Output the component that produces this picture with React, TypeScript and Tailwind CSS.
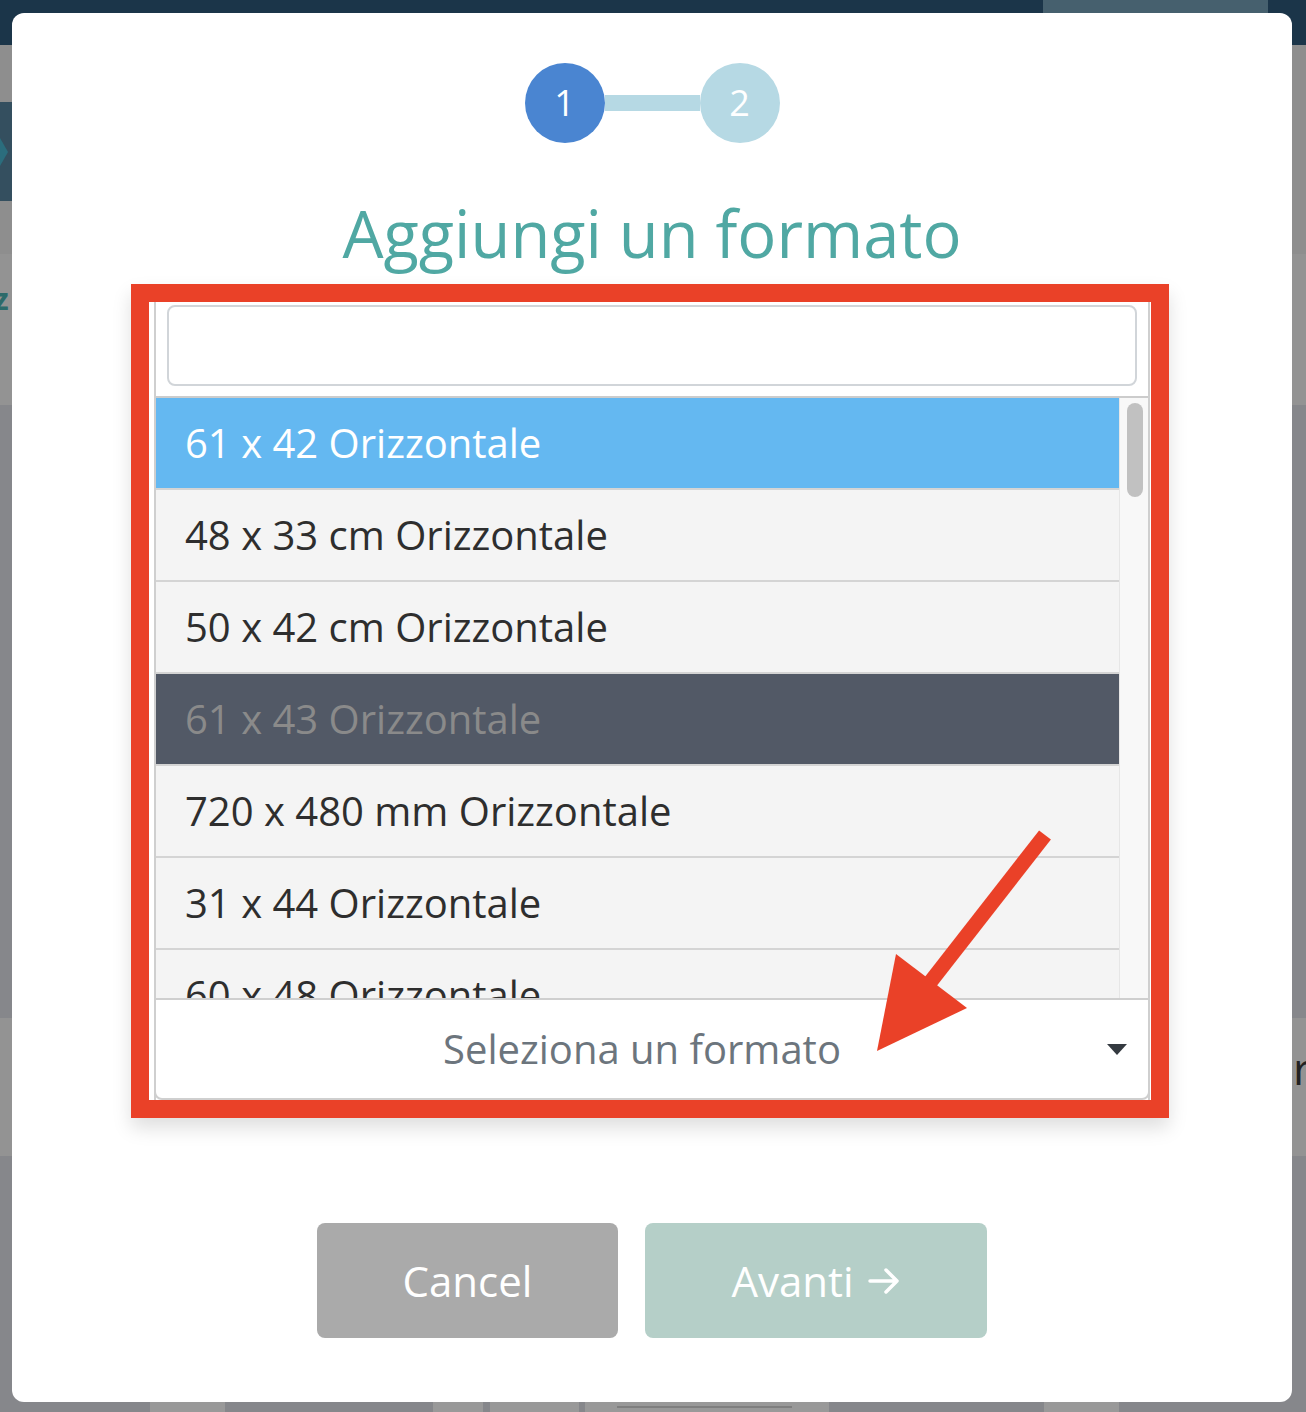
// Modal "Aggiungi un formato" with an open select dropdown, annotated by a red box and arrow.

const formats = [
  { label: "61 x 42 Orizzontale", kind: "active" },
  { label: "48 x 33 cm Orizzontale", kind: "normal" },
  { label: "50 x 42 cm Orizzontale", kind: "normal" },
  { label: "61 x 43 Orizzontale", kind: "disabled" },
  { label: "720 x 480 mm Orizzontale", kind: "normal" },
  { label: "31 x 44 Orizzontale", kind: "normal" },
  { label: "60 x 48 Orizzontale", kind: "normal" },
];

function Backdrop() {
  return (
    <div className="flex flex-col w-full h-full">
      <div className="h-[45px] bg-[#1b3549]">
        <div className="ml-[1043px] w-[225px] h-[13px] bg-[#46606e]" />
      </div>
      <div className="h-[57px] bg-[#8e8e8e]" />
      <div className="h-[99px] flex bg-[#8e8e8e]">
        <div className="w-[12px] bg-[#344f5f] flex items-center">
          <div className="border-y-[14px] border-l-[8px] border-y-transparent border-l-[#2b6d7d]" />
        </div>
      </div>
      <div className="h-[53px] bg-[#8e8e8e]" />
      <div className="h-[151px] bg-[#939393] pt-[30px]">
        <span className="block -ml-[6px] text-[30px] leading-none font-bold text-[#2c6a6a]">z</span>
      </div>
      <div className="h-[613px] bg-[#86878b]" />
      <div className="h-[138px] bg-[#939393] pt-[28px]">
        <span className="block ml-[1293px] text-[44px] leading-none text-[#222]">ro</span>
      </div>
      <div className="h-[246px] bg-[#86878b]" />
      <div className="h-[10px] flex bg-[#86878b]">
        <div className="w-[150px]" />
        <div className="w-[75px] bg-[#999]" />
        <div className="w-[208px]" />
        <div className="w-[50px] bg-[#999]" />
        <div className="w-[7px]" />
        <div className="w-[89px] bg-[#999]" />
        <div className="w-[6px]" />
        <div className="w-[244px] bg-[#999] pt-[4px] pl-[32px]">
          <div className="w-[175px] h-[2px] bg-[#7f7f7f]" />
        </div>
        <div className="w-[215px]" />
        <div className="w-[75px] bg-[#999]" />
      </div>
    </div>
  );
}

function Stepper() {
  return (
    <div className="flex items-center">
      <div className="w-[80px] h-[80px] rounded-full bg-[#4a85d1] flex items-center justify-center text-white text-[36px]">
        1
      </div>
      <div className="w-[95px] h-[16px] bg-[#b6d9e4]" />
      <div className="w-[80px] h-[80px] rounded-full bg-[#b6d9e4] flex items-center justify-center text-white text-[36px]">
        2
      </div>
    </div>
  );
}

function Dropdown() {
  return (
    <div className="mr-[4px] w-[1038px] h-[834px] border-[18px] border-[#ea4128] shadow-[0_10px_18px_rgba(0,0,0,0.13)] bg-white pl-[5px] pr-px">
      <div className="h-full flex flex-col border-x-2 border-[#cfcfcf]">
        {/* search */}
        <div className="pt-[3px] pb-[10px] px-[11px]">
          <div className="h-[81px] rounded-[8px] border-2 border-[#d1d5d9] bg-white" />
        </div>
        {/* options */}
        <div className="h-[602px] flex border-t-2 border-[#cccccc] overflow-hidden">
          <div className="flex-1 flex flex-col">
            {formats.map((f) => (
              <div
                key={f.label}
                className={
                  "h-[92px] shrink-0 flex items-center pl-[29px] border-b-2 border-[#d4d4d4] text-[40px] " +
                  (f.kind === "active"
                    ? "bg-[#64b8f1] text-white"
                    : f.kind === "disabled"
                    ? "bg-[#525966] text-[#8a8a8a]"
                    : "bg-[#f4f4f4] text-[#2e2e2e]")
                }
              >
                {f.label}
              </div>
            ))}
          </div>
          <div className="w-[29px] bg-[#f8f8f8] border-l border-[#e6e6e6] pt-[5px] pl-[7px]">
            <div className="w-[16px] h-[94px] rounded-full bg-[#c1c1c1]" />
          </div>
        </div>
        {/* select */}
        <div className="h-[102px] -mx-[2px] flex items-center pl-[21px] pr-[21px] border-2 border-[#cfcfcf] rounded-b-[8px] bg-white">
          <span className="flex-1 text-center text-[40px] text-[#6c757d]">Seleziona un formato</span>
          <div className="border-x-[10px] border-t-[11px] border-x-transparent border-t-[#343a40]" />
        </div>
      </div>
    </div>
  );
}

export default function App() {
  return (
    <div className="relative w-[1306px] h-[1412px] overflow-hidden bg-[#86878b] font-['Open_Sans',sans-serif]">
      <Backdrop />

      {/* modal */}
      <div className="absolute left-[12px] top-[13px] w-[1280px] h-[1389px] rounded-[12px] bg-white flex flex-col items-center pt-[50px]">
        <Stepper />
        <h2 className="mt-[58px] mb-[19px] text-[65px] leading-none text-[#50a8a3] h-[64px]">Aggiungi un formato</h2>
        <Dropdown />
        <div className="mt-[105px] flex gap-[27px]">
          <button className="w-[301px] h-[115px] rounded-[8px] bg-[#aaaaaa] text-white text-[42px]">Cancel</button>
          <button className="w-[342px] h-[115px] rounded-[8px] bg-[#b5cfc8] text-white text-[42px] flex items-center justify-center gap-[13px]">
            <span>Avanti</span>
            <svg width="34" height="30" viewBox="0 0 34 30" fill="none" stroke="white" strokeWidth="3.5" strokeLinecap="round" strokeLinejoin="round">
              <path d="M3 15h27M19 4l11 11-11 11" />
            </svg>
          </button>
        </div>
      </div>

      {/* annotation arrow */}
      <svg className="absolute left-0 top-0 pointer-events-none" width="1306" height="1412" viewBox="0 0 1306 1412">
        <line x1="1045" y1="835" x2="928" y2="985" stroke="#ea4128" strokeWidth="15" />
        <polygon points="877,1051 896,954 967,1008" fill="#ea4128" />
      </svg>
    </div>
  );
}
